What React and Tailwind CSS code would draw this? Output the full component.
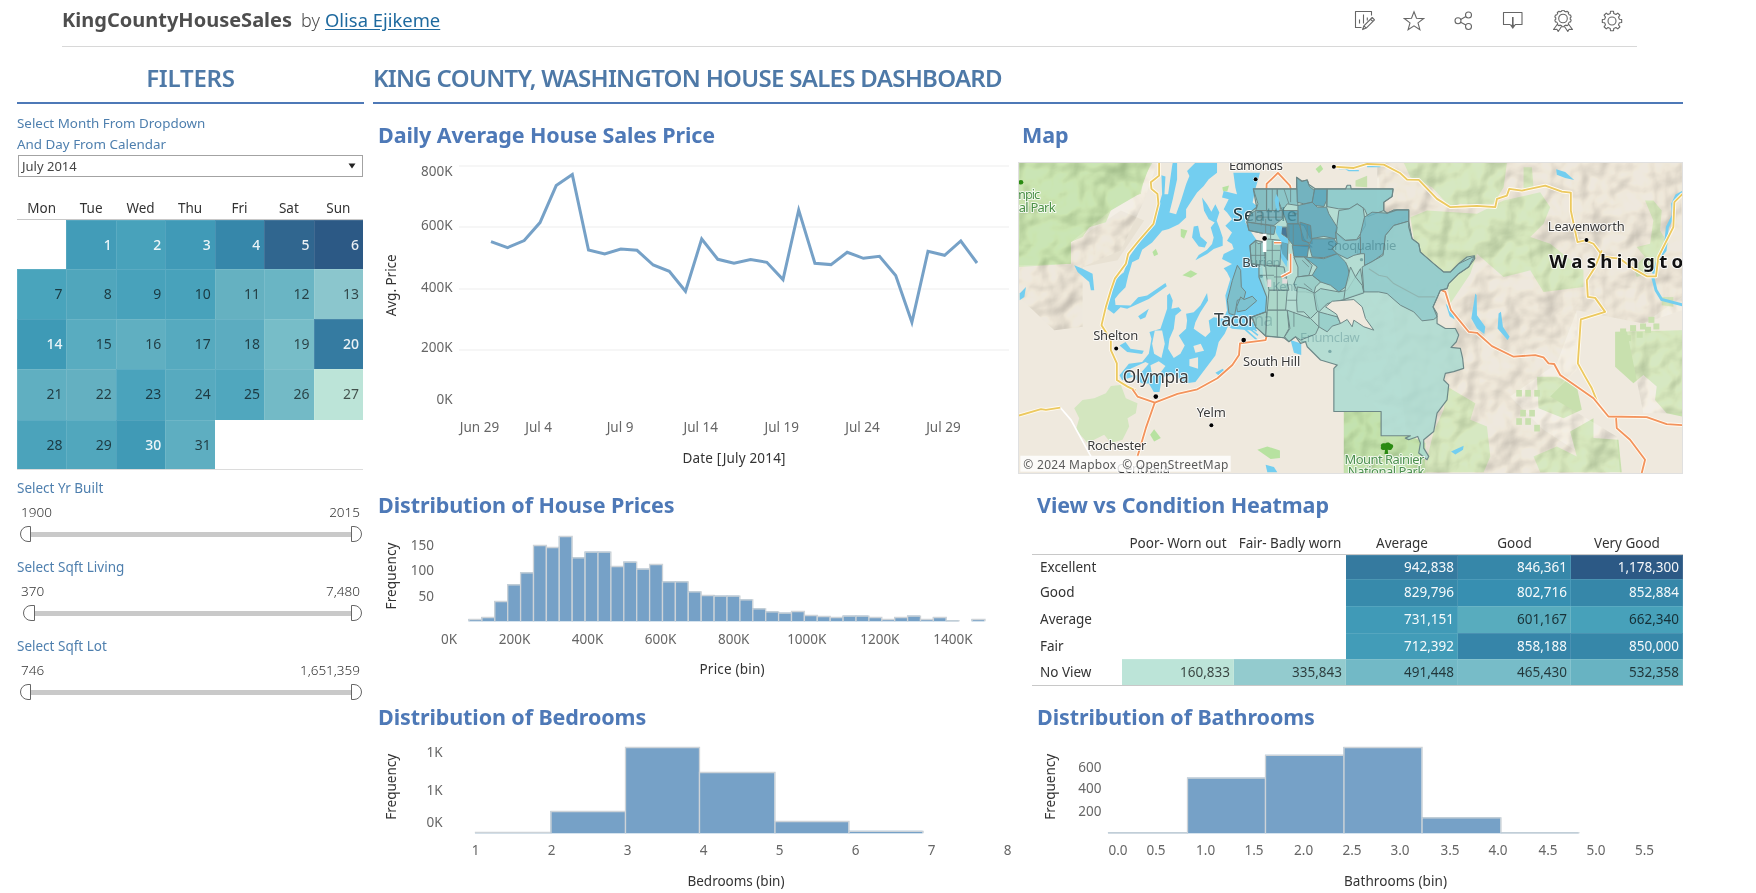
import React from "react";

const FONT = "font-['Noto_Sans','Open_Sans',sans-serif]";

/* ---------- toolbar icons ---------- */

function gearPath(cx, cy, teeth, r1, r2) {
  const pts = [];
  const step = (Math.PI * 2) / teeth;
  for (let i = 0; i < teeth; i++) {
    const a = i * step - Math.PI / 2;
    [[-0.3, r1], [-0.2, r2], [0.2, r2], [0.3, r1]].forEach(([k, r]) => {
      pts.push(`${(cx + Math.cos(a + k * step) * r).toFixed(2)},${(cy + Math.sin(a + k * step) * r).toFixed(2)}`);
    });
  }
  return `M${pts.join("L")}Z`;
}

function Icon({ children }) {
  return (
    <svg width="22" height="22" viewBox="0 0 22 22" fill="none" stroke="#666" strokeWidth="1.1" strokeLinejoin="round">
      {children}
    </svg>
  );
}

function Toolbar() {
  return (
    <div className="flex items-center gap-[27.5px] pr-[14px]">
      <Icon>
        <path d="M17.5 5.500V1.5H1.5v16h6M5.5 9.500v4M9.500 4.500v9M13.300 7.500v3" />
        <path d="M18.200 7.500l2.300 2.300-8.300 8.300-3.600 1.500 1.300-3.800zM16.500 9.200l2.300 2.300M9.900 15.800l2.300 2.300" />
      </Icon>
      <Icon>
        <path d="M11 1.800l2.500 6.500 7 .3-5.500 4.300 1.900 6.800L11 15.800l-5.900 3.900L7 12.900 1.500 8.600l7-.3z" strokeLinejoin="miter" />
      </Icon>
      <Icon>
        <circle cx="5" cy="10.800" r="3" />
        <circle cx="15.500" cy="5" r="3" />
        <circle cx="15.500" cy="16.500" r="3" />
        <path d="M7.700 9.400l5.200-3M7.700 12.200l5.200 2.900" />
      </Icon>
      <Icon>
        <path d="M8.500 14.500H1.500v-12h18.500v12h-7" />
        <path d="M10.800 7v9" strokeWidth="1.600" />
        <path d="M7.800 14.800h6l-3 4.200z" fill="#666" stroke="none" />
      </Icon>
      <Icon>
        <path d={gearPath(11, 8.500, 10, 7.300, 8.300)} />
        <circle cx="11" cy="8.500" r="4.300" />
        <path d="M5.200 14.500L1.500 19.500l3.400-.2 1.300 2.200 3.300-5M16.800 14.500l3.700 5-3.400-.2-1.300 2.200-3.300-5" />
      </Icon>
      <Icon>
        <path d={gearPath(11, 11, 8, 7.600, 9.800)} />
        <circle cx="11" cy="11" r="4" />
      </Icon>
    </div>
  );
}

/* ---------- filters ---------- */

const DAYS = ["Mon", "Tue", "Wed", "Thu", "Fri", "Sat", "Sun"];

const WEEKS = [
  [null, [1, "#429cb8", 1], [2, "#48a2bb", 1], [3, "#409ab7", 1], [4, "#3687aa", 1], [5, "#30668f", 1], [6, "#2c5985", 1]],
  [[7, "#49a4bc"], [8, "#50a6bc"], [9, "#48a2bb"], [10, "#48a2bb"], [11, "#65b1c1"], [12, "#6ab5c4"], [13, "#8bc6cd"]],
  [[14, "#3e9ab6", 1], [15, "#59acc0"], [16, "#60afc1"], [17, "#56aabf"], [18, "#5cacc0"], [19, "#77bdc8"], [20, "#357ba1", 1]],
  [[21, "#60afc1"], [22, "#64b0c1"], [23, "#4aa3bc"], [24, "#57aabf"], [25, "#50a7be"], [26, "#73bac6"], [27, "#bce4d8"]],
  [[28, "#4ba3bb"], [29, "#51a7bd"], [30, "#409ab6", 1], [31, "#5eaec1"], null, null, null],
];

function Calendar() {
  return (
    <div className="mr-px mt-[21px]">
      <div className="grid h-[22px] grid-cols-7 border-b border-[#c8c8c8] text-center text-[13.500px] leading-[20px] text-[#333]">
        {DAYS.map((d) => (
          <div key={d}>{d}</div>
        ))}
      </div>
      <div className="grid h-[250px] grid-cols-7 grid-rows-[49px_50px_50px_51px_49px] border-b border-[#dcdcdc]">
        {WEEKS.flat().map((c, i) =>
          c ? (
            <div
              key={i}
              className={`border-l border-t border-white/10 pr-[4px] text-right text-[14px] leading-[48px] ${c[2] ? "font-medium text-white/90" : "text-black/65"}`}
              style={{ backgroundColor: c[1] }}
            >
              {c[0]}
            </div>
          ) : (
            <div key={i} />
          )
        )}
      </div>
    </div>
  );
}

function RangeFilter({ label, min, max, wide }) {
  return (
    <div className="h-[79px]">
      <div className="text-[13.500px] leading-[20px] text-[#4e7fae]">{label}</div>
      <div className="mt-[4px] flex justify-between pl-[4px] pr-[4px] text-[13.500px] font-light leading-[20px] text-[#333]">
        <span>{min}</span>
        <span>{max}</span>
      </div>
      <div className={`mt-[4px] flex items-center pr-[2px] ${wide ? "pl-[6px]" : "pl-[3px]"}`}>
        <div className={`h-4 rounded-l-full border border-[#666] bg-white ${wide ? "w-3" : "w-[11px]"}`} />
        <div className="h-[5px] flex-1 bg-[#c9c9c9]" />
        <div className="h-4 w-[11px] rounded-r-full border border-[#666] bg-white" />
      </div>
    </div>
  );
}

function Filters() {
  return (
    <aside className="w-[347px] shrink-0">
      <h2 className="h-[57px] border-b-2 border-[#4e79b7] pt-[7px] text-center text-[24px] font-semibold leading-[48px] tracking-[-0.200px] text-[#4e79a7]">
        FILTERS
      </h2>
      <div className="mt-[9px] text-[13.400px] leading-[21px] text-[#4e7fae]">
        Select Month From Dropdown
        <br />
        And Day From Calendar
      </div>
      <div className="mx-px flex h-[22px] items-center justify-between border border-[#a3a3a3] pl-[3px] pr-[6px] text-[13px] leading-[20px] text-[#444]">
        <span>July 2014</span>
        <svg width="8" height="6" viewBox="0 0 8 6">
          <path d="M0.500 0.500h7L4 5.500z" fill="#222" />
        </svg>
      </div>
      <Calendar />
      <div className="mt-2">
        <RangeFilter label="Select Yr Built" min="1900" max="2015" />
        <RangeFilter label="Select Sqft Living" min="370" max="7,480" wide />
        <RangeFilter label="Select Sqft Lot" min="746" max="1,651,359" />
      </div>
    </aside>
  );
}

/* ---------- charts ---------- */

function PanelTitle({ children, className }) {
  return (
    <h3 className={`text-[21.500px] font-bold leading-[30px] tracking-[-0.100px] text-[#4e79b7] ${className}`}>{children}</h3>
  );
}

function Ticks({ items, anchor = "middle" }) {
  return (
    <g fill="#666" fontSize="13.500" textAnchor={anchor}>
      {items.map(([t, x, y], i) => (
        <text key={i} x={x} y={y}>
          {t}
        </text>
      ))}
    </g>
  );
}

function AxisTitle({ x, y, w, rotate, children }) {
  return (
    <text
      x={x}
      y={y}
      fill="#333"
      fontSize="13.500"
      textAnchor="middle"
      textLength={w}
      transform={rotate ? `rotate(-90 ${x} ${y})` : undefined}
    >
      {children}
    </text>
  );
}

function Bars({ base, bars }) {
  return (
    <g>
      {bars.map(([x1, x2, y], i) => (
        <g key={i}>
          <rect x={x1} y={y} width={x2 - x1} height={base - y} fill="#76a1c7" />
          <path d={`M${x1 + 0.5} ${base}V${y + 0.5}H${x2 + 0.5}V${base}`} fill="none" stroke="#cdd3d8" strokeWidth="1.300" />
        </g>
      ))}
    </g>
  );
}

const DAILY = [
  [491, 242.300], [507.600, 248.300], [524.200, 241.300], [540, 223.300], [556.200, 186.300], [572.300, 175.300], [588.500, 250.700],
  [604.700, 254.700], [620.800, 249.700], [637, 251], [653.200, 265.700], [669.300, 272], [685.500, 292], [701.700, 239.700],
  [717.800, 260], [734, 264], [750.600, 260.300], [766.800, 263], [783, 280.300], [798.700, 210.700], [814.900, 264], [831, 265.300],
  [847.200, 253], [863.400, 259], [879.500, 257], [895.700, 276.300], [911.900, 323], [928, 252], [944.600, 256], [960.800, 241.700],
  [977, 263.700],
];

function DailyChart() {
  return (
    <svg width="640" height="326" viewBox="373 150.700 640 326">
      <g stroke="#f6f6f6" strokeWidth="2">
        <path d="M459 166.700H1009M459 227.700H1009M459 289.700H1009M459 350.700H1009" />
      </g>
      <polyline points={DAILY.map((p) => p.join()).join(" ")} fill="none" stroke="#76a1c7" strokeWidth="3" />
      <Ticks anchor="end" items={[["800K", 452.500, 177], ["600K", 452.500, 231], ["400K", 452.500, 292.500], ["200K", 452.500, 353], ["0K", 452.500, 405]]} />
      <Ticks
        items={[["Jun 29", 479.500, 433], ["Jul 4", 538.700, 433], ["Jul 9", 620, 433], ["Jul 14", 700.800, 433], ["Jul 19", 781.700, 433], ["Jul 24", 862.500, 433], ["Jul 29", 943.400, 433]]}
      />
      <AxisTitle x={734} y={464} w={103}>Date [July 2014]</AxisTitle>
      <AxisTitle x={396} y={286} w={62} rotate>Avg. Price</AxisTitle>
    </svg>
  );
}

const PRICE_TOPS = [
  619.700, 617.700, 601.700, 585, 573, 545.700, 547.700, 536.700, 558, 552.300, 552.300, 566.700, 562.300, 569.300, 564.700, 582, 582,
  592, 595.700, 596.300, 596.300, 600, 609, 612, 613.300, 611.700, 615.700, 616.700, 617.700, 616.300, 616.300, 617.700, 619.700,
  617.700, 616.300, 619.700, 617.700, 621, null, 619.700,
];

function PriceChart() {
  const bars = PRICE_TOPS.map((y, i) => [468.500 + i * 12.900, 468.500 + (i + 1) * 12.900, y]).filter((b) => b[2] !== null);
  return (
    <svg width="640" height="170" viewBox="373 520.700 640 170">
      <Bars base={622} bars={bars} />
      <Ticks anchor="end" items={[["150", 434, 551], ["100", 434, 576], ["50", 434, 602]]} />
      <Ticks
        items={["0K", "200K", "400K", "600K", "800K", "1000K", "1200K", "1400K"].map((t, i) => [t, i ? 514.500 + (i - 1) * 73.070 : 449, 645])}
      />
      <AxisTitle x={732} y={674.500} w={65}>Price (bin)</AxisTitle>
      <AxisTitle x={396} y={576.700} w={67} rotate>Frequency</AxisTitle>
    </svg>
  );
}

function BedroomChart() {
  return (
    <svg width="640" height="161" viewBox="373 732.700 640 161">
      <Bars
        base={834}
        bars={[[475, 550.500, 832.700], [550.500, 625, 811.700], [625, 699, 747.700], [699, 774.500, 772.700], [774.500, 848.500, 821.700], [848.500, 922.600, 831.500]]}
      />
      <Ticks anchor="end" items={[["1K", 442.500, 758], ["1K", 442.500, 795.500], ["0K", 442.500, 827.500]]} />
      <Ticks items={[1, 2, 3, 4, 5, 6, 7, 8].map((n) => [n, 475.500 + (n - 1) * 76, 856])} />
      <AxisTitle x={736} y={886.500} w={97}>Bedrooms (bin)</AxisTitle>
      <AxisTitle x={396} y={787.500} w={66} rotate>Frequency</AxisTitle>
    </svg>
  );
}

function BathroomChart() {
  const xs = [1118, 1156, 1205.600, 1254, 1303.600, 1352, 1400, 1450, 1498, 1548, 1596, 1644.500];
  return (
    <svg width="651" height="161" viewBox="1032 732.700 651 161">
      <Bars
        base={834}
        bars={[[1108, 1187, 833], [1187, 1265, 778.300], [1265, 1343.500, 755.500], [1343.500, 1421.600, 747.700], [1421.600, 1500.500, 818], [1500.500, 1578.500, 833]]}
      />
      <Ticks anchor="end" items={[["600", 1101.500, 773], ["400", 1101.500, 794], ["200", 1101.500, 816.500]]} />
      <Ticks items={xs.map((x, i) => [(i / 2).toFixed(1), x, 856])} />
      <AxisTitle x={1395.500} y={886.500} w={103}>Bathrooms (bin)</AxisTitle>
      <AxisTitle x={1055} y={787.500} w={66} rotate>Frequency</AxisTitle>
    </svg>
  );
}

/* ---------- heatmap ---------- */

const HEAT = [
  ["Excellent", null, null, ["942,838", "#357a9f", 1], ["846,361", "#3687a9", 1], ["1,178,300", "#2c5985", 1]],
  ["Good", null, null, ["829,796", "#378aab", 1], ["802,716", "#378fb1", 1], ["852,884", "#3687a9", 1]],
  ["Average", null, null, ["731,151", "#409ab7", 1], ["601,167", "#58acbe"], ["662,340", "#47a1ba"]],
  ["Fair", null, null, ["712,392", "#429cb8", 1], ["858,188", "#3685a9", 1], ["850,000", "#3687a9", 1]],
  ["No View", ["160,833", "#bce4d8"], ["335,843", "#93cbce"], ["491,448", "#72b9c6"], ["465,430", "#77bcc8"], ["532,358", "#68b3c2"]],
];

function Heatmap() {
  return (
    <div className="mt-[13px] text-[13.500px] text-[#333]">
      <div className="grid h-[22px] grid-cols-[90px_112px_112px_112px_113px_112px] border-b border-[#c8c8c8] text-center leading-[20px]">
        <div />
        {["Poor- Worn out", "Fair- Badly worn", "Average", "Good", "Very Good"].map((h) => (
          <div key={h} className="whitespace-nowrap">{h}</div>
        ))}
      </div>
      <div className="grid h-[131px] grid-cols-[90px_112px_112px_112px_113px_112px] grid-rows-[24px_27px_27px_26px_26px] border-b border-[#c8c8c8] leading-[20px]">
        {HEAT.flat().map((c, i) => {
          if (c === null) return <div key={i} />;
          if (typeof c === "string") return <div key={i} className="flex items-center pb-px pl-2">{c}</div>;
          return (
            <div
              key={i}
              className={`flex items-center justify-end border-r border-t border-white/10 pb-[2px] pr-[3px] ${c[2] ? "text-white/95" : "text-black/70"}`}
              style={{ backgroundColor: c[1] }}
            >
              {c[0]}
            </div>
          );
        })}
      </div>
    </div>
  );
}

/* ---------- map ---------- */

const LAND = "#efe9de";

const FOREST = [
  "24,156 425,156 400,200 390,250 340,262 300,300 285,335 235,350 215,380 180,395 180,460 24,470",
  "1180,156 1490,156 1480,230 1450,280 1400,285 1350,280 1320,290 1265,230 1200,200",
  "1200,320 1250,300 1400,310 1480,270 1590,245 1620,290 1600,340 1560,380 1620,400 1720,480 1720,530 1600,545 1560,480 1480,500 1400,430 1380,490 1320,580 1310,520 1270,470 1230,430 1210,385",
  "1580,800 1640,800 1700,830 1715,900 1660,925 1585,895",
  "1310,830 1395,880 1380,930 1430,950 1440,1040 1420,1088 1240,1088 1270,965 1300,900",
  "1570,1040 1640,1010 1700,1040 1680,965 1750,925 1750,985 1825,990 1835,1088 1590,1088",
  "1815,665 2018,660 2018,920 1970,910 1935,870 1940,830 1900,795 1870,820 1815,770",
  "1955,560 1990,560 1990,590 1955,585",
  "1905,270 1930,270 1955,300 1950,360 1975,400 1940,480 1880,500 1870,470 1905,440 1880,410 1920,400 1930,330",
  "1540,170 1565,170 1570,230 1540,235",
  "1035,210 1070,195 1070,230 1035,228",
];

const LOWLAND_FOREST = [
  "285,850 300,828 330,825 345,865 380,880 375,910 350,925 355,950 335,990 300,1000 280,975 230,1000 195,960 205,925 190,895 215,870 250,865",
];

const PARKS = [
  "740,1020 770,1010 808,1022 808,1045 780,1048",
  "515,495 540,480 560,490 540,502",
  "510,355 530,360 520,385 510,378",
  "915,175 930,162 938,175 925,188",
  "418,975 430,958 450,985 430,995",
  "635,230 655,225 650,242 637,242",
  "425,425 435,415 442,432 430,438",
];

/* Puget Sound and its inlets, drawn in their own local frame */
const SOUND = [
  "188,38 200,42 197,95 208,95 220,10 222,0 235,0 235,50 222,110 212,150 232,155 248,110 262,65 272,40 265,25 290,0 355,0 355,30 330,50 315,70 295,90 278,115 262,140 262,165 240,185 210,200 190,205 160,240 130,262 120,290 100,300 88,340 80,375 60,395 48,410 50,428 95,430 118,405 145,400 200,362 204,372 165,400 150,410 110,428 85,440 65,435 45,455 25,440 28,420 50,350 75,330 90,285 125,235 160,190 180,130 190,95",
  "404,30 484,30 470,80 462,120 480,135 445,150 440,180 455,205 475,235 475,300 490,305 495,350 505,390 505,445 475,465 455,470 475,500 460,505 400,500 385,490 375,470 385,445 380,400 395,350 385,330 375,318 400,305 370,290 375,275 405,260 400,245 385,235 400,210 380,190 400,170 385,150 375,140 390,110 370,105 375,85 415,95 410,75",
  "345,465 375,470 388,492 378,515 360,540 350,580 320,620 290,660 258,665 225,640 190,645 182,690 165,690 150,665 130,665 100,645 70,655 62,640 90,605 130,600 150,575 158,530 152,510 185,500 195,470 205,440 205,400 213,393 222,415 218,440 240,435 248,445 230,460 225,500 212,530 208,560 225,588 245,575 258,550 240,520 262,500 265,475 262,455 285,450 305,430 325,392 328,415 305,450 290,480 285,500 320,525 335,510 330,475",
  "310,105 325,125 338,148 350,125 362,150 354,175 362,195 372,225 372,250 345,260 325,275 290,294 300,278 325,262 340,245 345,225 336,195 348,180 330,170 316,145",
  "285,192 298,190 305,222 325,240 318,255 300,252 280,225",
  "62,550 80,540 95,560 135,566 130,576 85,570",
  "118,462 150,440 140,465 125,472",
  "350,632 372,620 378,628 362,642",
];

const SOUND_ISLANDS = [
  "284,552 306,545 316,566 290,572",
  "272,592 298,586 298,620 272,612",
  "168,505 190,505 198,545 188,588 166,575 160,545",
  "95,620 140,600 150,605 120,640 95,640",
  "155,610 180,598 200,612 185,632 160,640",
];

const LAKES = [
  "190,465 215,475 245,490 250,540 240,540 235,515 200,485",
  "26,550 45,530 40,560 26,570",
  "840,690 872,700 872,735 850,728",
  "765,1065 790,1072 800,1088 770,1088",
  "1638,176 1665,184 1692,208 1665,202 1640,192",
  "1395,550 1399,555 1400,615 1425,650 1422,672 1400,655 1383,625",
  "1465,610 1472,605 1478,650 1498,680 1492,690 1462,655",
  "1322,1025 1360,1008 1358,1020 1335,1034",
  "1306,580 1325,600 1333,628 1318,618",
];

const YELLOW_ROADS = [
  "445,156 445,195 420,215 422,235 440,250 443,280 428,340 385,390 352,430 345,460 312,505 300,540 285,590 272,645 300,690 300,720 318,760 318,810 350,830 375,842",
  "24,917 90,898 105,900 148,893",
  "968,168 1030,172 1070,160 1120,162 1170,188 1190,207 1225,208 1280,265 1320,290 1400,286 1455,290 1460,265 1490,255 1497,235 1535,240 1605,225 1655,243 1682,246 1682,300 1702,395 1725,390 1750,400 1780,440 1830,445 1870,475 1910,498 1938,498 1945,440 1990,350 1993,275 2018,250",
  "1775,420 1755,470 1730,510 1733,560 1755,563 1785,605 1712,628 1703,760 1725,800 1745,835 1765,885 1790,915",
];

const ORANGE_ROADS = [
  "765,300 768,220 802,187 838,225 842,240",
  "365,838 380,860 432,878 500,852 560,838 620,805 665,765 685,735 688,700 765,690 770,670",
  "432,878 405,955 380,1040",
  "1290,538 1305,545 1322,600 1375,665 1400,668 1445,708 1510,740 1575,735 1600,742 1615,760 1632,762 1650,795 1750,865 1795,920 1910,922 1970,943 2018,946",
  "1818,925 1820,955 1860,990 1905,1050 1895,1090",
];

const COUNTY =
  "728,235 858,235 858,200 875,212 890,208 895,222 915,235 1005,235 1010,224 1020,224 1022,235 1148,235 1145,258 1120,275 1120,300 1130,308 1160,298 1195,298 1195,350 1205,385 1225,400 1230,425 1270,460 1300,485 1320,485 1345,460 1370,440 1392,436 1393,445 1375,470 1345,490 1315,520 1310,535 1290,540 1268,590 1280,610 1280,640 1305,655 1335,655 1345,675 1338,695 1322,712 1350,715 1357,745 1360,775 1330,785 1305,790 1300,810 1315,825 1310,870 1280,910 1270,965 1240,990 1240,1015 1255,1040 1250,1050 1225,1030 1230,1000 1222,980 1195,990 1185,985 1200,978 1112,978 1112,905 970,905 970,775 980,765 930,750 890,710 885,695 870,700 855,680 835,695 820,683 790,680 765,678 735,650 725,620 765,605 768,560 745,500 745,465 722,460 718,405 735,390 760,395 762,370 715,360 708,335 720,305 738,290";

const ZONES = [
  ["728,235 768,235 768,300 735,300 742,280", "#79b7be"],
  ["768,235 800,235 800,262 812,300 768,300", "#7fbcc3"],
  ["800,235 860,235 862,285 830,280 815,300 800,262", "#82c0c6"],
  ["858,200 872,212 890,208 897,228 912,240 905,275 880,280 860,275", "#63a9ba"],
  ["912,235 950,235 948,270 940,288 915,285 905,275", "#4f9fb8"],
  ["950,235 1148,235 1145,258 1120,275 1120,300 1072,318 1062,295 1040,280 1020,295 985,295 948,288", "#8ac8ca"],
  ["985,300 1015,295 1040,280 1058,292 1062,320 1065,345 1050,370 1038,388 1000,390 975,365 980,340", "#8fcaca"],
  ["862,285 905,275 920,290 948,290 955,310 980,350 975,385 940,378 900,385 880,345 862,340", "#5aa3b8"],
  ["815,300 862,300 862,340 830,340", "#4f9ab3"],
  ["735,300 815,300 815,325 790,345 710,335 720,310", "#6fa9b6"],
  ["710,335 795,348 790,372 762,370 715,360", "#5e9fb2"],
  ["830,340 865,340 880,385 905,410 848,405 828,380", "#3e8ca9"],
  ["812,350 828,350 830,382 812,370", "#2e5c86"],
  ["868,335 900,345 905,400 875,390", "#4793ae"],
  ["905,385 970,385 980,400 965,415 980,430 940,442 905,440 895,405", "#4b99b3"],
  ["845,405 895,405 890,440 850,438", "#3e91b1"],
  ["808,392 832,400 830,450 812,440", "#4d9fbd"],
  ["880,440 905,442 940,445 980,430 1005,455 1012,470 1018,500 1005,530 985,545 960,525 930,515 905,495 920,470", "#57a7bd"],
  ["1062,320 1085,305 1130,308 1150,298 1195,298 1195,332 1150,345 1125,375 1118,430 1085,455 1062,465 1062,430 1040,430 1050,370", "#6db3c0"],
  ["975,365 1005,390 1038,388 1050,380 1050,430 1030,435 1010,445 980,430 965,415 980,400", "#77bac4"],
  ["1195,332 1205,385 1225,400 1230,425 1270,460 1300,485 1320,485 1345,460 1392,438 1375,470 1345,490 1315,520 1310,535 1290,540 1268,590 1280,620 1270,628 1235,632 1210,605 1170,585 1130,550 1105,545 1060,545 1055,470 1118,435 1125,375 1150,345", "#90c9ca"],
  ["718,405 735,392 742,400 760,395 765,465 722,460", "#89bfbd"],
  ["765,385 812,390 808,465 765,465", "#98cac2"],
  ["765,465 820,470 835,540 775,540 768,500", "#a1cfc3"],
  ["850,440 880,440 905,465 895,495 862,500 862,470", "#8dc4c4"],
  ["858,500 905,495 930,515 915,530 910,550 885,545 860,545 850,520", "#95cac6"],
  ["775,540 830,540 825,600 770,600", "#aad6c7"],
  ["860,530 885,535 915,550 918,575 925,600 900,625 880,605 860,605 858,570", "#a5d5ca"],
  ["770,600 830,600 835,655 820,683 765,678", "#a9d7c8"],
  ["722,620 768,605 765,678 735,650", "#9bcbc3"],
  ["830,600 900,625 925,650 915,672 870,690 855,680 835,695 822,680 838,655", "#9dd1c6"],
  ["925,605 950,612 980,620 990,640 965,648 950,665 925,650", "#94cdc9"],
  ["910,550 930,535 985,545 1010,540 1050,475 1060,545 1000,568 950,580 925,605 918,600", "#9bd0c9"],
  ["1020,470 1035,500 1055,525 1060,548 1000,568 1005,530", "#a5d7ce"],
  ["680,465 690,480 692,530 705,545 700,565 680,570 672,615 655,610 650,570 665,510", "#7fbcc2"],
  ["690,560 700,568 725,558 738,572 705,600 680,605 678,590", "#7fbfc8"],
];

const COUNTY_HOLE = "945,590 965,573 1030,568 1055,590 1065,625 1090,660 1060,650 1030,630 1025,650 1010,628 990,640 978,612";

function Place({ x, y, w, size = 39, children, fill = "#3b3b3b", weight = 400 }) {
  return (
    <text x={x} y={y} fontSize={size} textLength={w} fill={fill} fontWeight={weight} stroke="#fff" strokeWidth="6" paintOrder="stroke" strokeLinejoin="round" strokeOpacity=".8">
      {children}
    </text>
  );
}

function Polys({ list, fill }) {
  return list.map((p, i) => <polygon key={i} points={p} fill={fill} />);
}

function Roads({ list, color }) {
  return (
    <g fill="none" strokeLinejoin="round">
      {list.map((p, i) => (
        <polyline key={`c${i}`} points={p} stroke="#fffaf0" strokeWidth="11" />
      ))}
      {list.map((p, i) => (
        <polyline key={i} points={p} stroke={color} strokeWidth="5.500" />
      ))}
    </g>
  );
}

function RegionMap() {
  return (
    <svg className="mt-3 block border border-[#e0e0e0]" width="665" height="312" viewBox="24 157 1992 933" preserveAspectRatio="none">
      <defs>
        <filter id="relief" x="0" y="0" width="100%" height="100%" colorInterpolationFilters="sRGB">
          <feTurbulence type="fractalNoise" baseFrequency=".008" numOctaves="3" seed="11" />
          <feDiffuseLighting surfaceScale="34" diffuseConstant="1.150" lightingColor="#fff8e6">
            <feDistantLight azimuth="225" elevation="60" />
          </feDiffuseLighting>
        </filter>
        <clipPath id="mountains">
          <path d="M24 156H440L400 270L330 420L215 470L215 650L130 660L24 560ZM1100 156H2016V600L1900 640L1700 600L1700 780L1620 860L1820 980L1830 1090H1000V905H1112L970 775L1100 500ZM1850 660H2016V910H1900Z" />
        </clipPath>
      </defs>
      <rect x="24" y="156" width="1992" height="935" fill={LAND} />
      <path d="M24 460L180 400L330 300L400 330L320 450L215 470L215 650L130 660L24 560ZM1100 156H2016V560L1900 640L1700 600L1640 760L1500 860L1600 960L1800 1090H1200Z" fill="#e8e1d3" />
      <Polys list={FOREST} fill="#c8e0ae" />
      <Polys list={LOWLAND_FOREST} fill="#d3e6bf" />
      <Polys list={PARKS} fill="#b7e2a0" />
      <polygon points="24,156 420,156 385,250 300,300 180,395 180,460 24,465" fill="#b9dc9c" />
      <polygon points="1000,905 1112,905 1112,978 1200,978 1245,1000 1245,1091 1000,1091" fill="#afd996" />
      <g clipPath="url(#mountains)">
        <rect x="24" y="156" width="1992" height="935" filter="url(#relief)" opacity=".25" style={{ mixBlendMode: "multiply" }} />
      </g>
      <g fill="#c8e0ae">
        {[1518, 1545, 1572, 1530, 1557, 1518, 1545, 1572].map((x, i) => (
          <rect key={i} x={x} y={[840, 840, 840, 900, 900, 925, 925, 945][i]} width="17" height="20" />
        ))}
        {[1830, 1860, 1890, 1915, 1845, 1880, 1905, 1930].map((x, i) => (
          <rect key={`b${i}`} x={x} y={[655, 645, 640, 620, 675, 665, 650, 640][i]} width="18" height="18" />
        ))}
      </g>
      <g transform="translate(264 156)">
        <Polys list={SOUND} fill="#73cef0" />
        <Polys list={SOUND_ISLANDS} fill={LAND} />
      </g>
      <Polys list={LAKES} fill="#73cef0" />
      <path d="M700 655l40 35M708 648l34 28M716 645l22 18" stroke="#73cef0" strokeWidth="5" fill="none" />
      <g fill="none" stroke="#73cef0">
        <polyline points="2018,245 2000,255 1988,280 1990,315 1972,350 1965,420 1945,445 1930,490" strokeWidth="9" />
        <polyline points="1928,500 1938,540 1955,568 2018,584" strokeWidth="9" />
        <path d="M985 174h20l10 6h30M1070 168h40" strokeWidth="4" />
      </g>
      <polyline points="148,893 180,930 210,985 240,1040" fill="none" stroke="#fff" strokeWidth="5" />
      <Roads list={YELLOW_ROADS} color="#ecc95f" />
      <Roads list={ORANGE_ROADS} color="#f3935c" />

      <Place x={667} y={333} w={192} size={54} fill="#222">Seattle</Place>
      <Place x={695} y={471} w={115}>Burien</Place>
      <Place x={610} y={648} w={178} size={52}>Tacoma</Place>

      <polygon points={COUNTY} fill="#a9dad1" fillOpacity=".84" />
      <g fillOpacity=".8" stroke="#6d8888" strokeWidth="3" strokeLinejoin="round">
        {ZONES.map(([p, c], i) => (
          <polygon key={i} points={p} fill={c} />
        ))}
      </g>
      <g fill="none" stroke="#6d8888" strokeWidth="2.500">
        <path d="M735 300V335M752 300V345M785 235V300M820 235L835 280M840 235V275M862 310H845M740 320H815M765 325V370M780 345V385M835 345V400M848 340V405M890 345V385M735 395V462M750 398V462M785 390V465M798 465V540M745 495H790M790 500H830M800 540V600M830 570H860M800 600V680M850 605V650M720 435H765M765 420H810M875 450L895 470M880 520L905 540M950 235V290" />
      </g>
      <polygon points={COUNTY} fill="none" stroke="#6d8888" strokeWidth="3.500" strokeLinejoin="round" />
      <polygon points={COUNTY_HOLE} fill={LAND} stroke="#6d8888" strokeWidth="3" />
      <polygon points="797,250 805,265 805,300 798,300 792,270" fill="#73cef0" />
      <polygon points="798,345 815,348 812,372 832,385 832,400 812,395 795,365" fill="#73cef0" />
      <polygon points="808,400 815,430 830,450 828,470 812,445" fill="#73cef0" />
      <path d="M762 370V425M790 397H812M840 430V485L812 500" fill="none" stroke="#fff" strokeWidth="11" />
      <path d="M790 397H812M840 430V485L812 500" fill="none" stroke="#f3935c" strokeWidth="5" />
      <path d="M770 508h12v22h-12zM815 505h15v15h-15z" fill="#e4dcdc" />
      <path d="M1075 475L1105 495 1130 500 1150 520 1225 560H1275" fill="none" stroke="#8fb5b1" strokeWidth="3.500" />

      <g fill="#27606c" fillOpacity=".42" fontSize="39">
        <text x={667} y={333} textLength={192} fontSize="54">Seattle</text>
        <text x={695} y={471} textLength={115} fillOpacity=".3">Burien</text>
        <text x={785} y={543} textLength={75} fillOpacity=".3">Kent</text>
        <text x={610} y={648} textLength={178} fontSize="52" fillOpacity=".2">Tacoma</text>
        <text x={950} y={420} textLength={208} fillOpacity=".38">Snoqualmie</text>
        <text x={868} y={697} textLength={180} fillOpacity=".28">Enumclaw</text>
        <circle cx="1053" cy="448" r="5" />
        <circle cx="958" cy="724" r="5" />
        <circle cx="752" cy="498" r="5" />
      </g>

      <Place x={655} y={177} w={162}>Edmonds</Place>
      <Place x={247} y={689} w={135}>Shelton</Place>
      <Place x={336} y={818} w={198} size={52}>Olympia</Place>
      <Place x={697} y={768} w={172}>South Hill</Place>
      <Place x={558} y={920} w={88}>Yelm</Place>
      <Place x={229} y={1021} w={178}>Rochester</Place>
      <Place x={318} y={1090} w={160}>Centralia</Place>
      <Place x={1613} y={363} w={231}>Leavenworth</Place>
      <Place x={1617} y={474} w={452} size={56} weight={700} fill="#111">Washington</Place>
      <Place x={-42} y={266} w={130} fill="#4a9045">Olympic</Place>
      <Place x={-86} y={306} w={220} fill="#4a9045">National Park</Place>
      <Place x={1002} y={1062} w={240} fill="#4d9150">Mount Rainier</Place>
      <Place x={1012} y={1100} w={230} fill="#4d9150">National Park</Place>
      <path d="M1122 1033l2-13c-8 3-16-2-12-9-4-8 6-13 12-10 6-5 14-3 17 2 8 0 10 9 4 13-2 6-9 6-13 3l1 14z" fill="#2a8a12" />
      <circle cx="30" cy="215" r="7" fill="#2a8a12" />
      <g fill="#000" stroke="#fff" strokeWidth="3" paintOrder="stroke">
        {[[735, 206, 6], [970, 168, 6], [762, 384, 7], [699, 690, 7], [316, 715, 6], [435, 860, 7], [785, 795, 6], [602, 946, 6], [1729, 389, 6]].map(
          ([x, y, r]) => (
            <circle key={x} cx={x} cy={y} r={r} />
          )
        )}
      </g>
      <rect x="28" y="1038" width="632" height="48" fill="#fff" fillOpacity=".82" />
      <g fill="#5a5a5a" fontSize="36">
        <text x="37" y="1077" textLength="279">© 2024 Mapbox</text>
        <text x="334" y="1077" textLength="319">© OpenStreetMap</text>
      </g>
    </svg>
  );
}

/* ---------- page ---------- */

export default function App() {
  return (
    <div className={`h-[893px] w-[1756px] overflow-hidden bg-white ${FONT}`}>
      <header className="ml-[62px] flex h-[47px] w-[1575px] items-start justify-between border-b border-[#d8d8d8]">
        <div className="flex items-baseline text-[18.400px] leading-[39px]">
          <h1 className="w-[239px] whitespace-nowrap text-[20px] font-bold text-[#4e4e4e]">KingCountyHouseSales</h1>
          <span className="w-[24px] text-[18px] font-light text-[#4e4e4e]">by</span>
          <a className="whitespace-nowrap text-[#1f6a9f] underline underline-offset-2">Olisa Ejikeme</a>
        </div>
        <div className="mt-[10px]">
          <Toolbar />
        </div>
      </header>

      <div className="flex gap-[9px] pl-[17px]">
        <Filters />
        <main className="w-[1310px] shrink-0">
          <h2 className="h-[57px] whitespace-nowrap border-b-2 border-[#4e79b7] pt-[7px] text-[24px] font-semibold leading-[48px] tracking-[-0.700px] text-[#4e79a7]">
            KING COUNTY, WASHINGTON HOUSE SALES DASHBOARD
          </h2>
          <div className="flex h-[372px] pt-4">
            <section className="w-[645px] shrink-0">
              <PanelTitle className="pl-[5px]">Daily Average House Sales Price</PanelTitle>
              <DailyChart />
            </section>
            <section className="w-[665px] shrink-0">
              <PanelTitle className="pl-[4px]">Map</PanelTitle>
              <RegionMap />
            </section>
          </div>
          <div className="flex h-[212px] pt-[14px]">
            <section className="w-[659px] shrink-0">
              <PanelTitle className="pl-[5px]">Distribution of House Prices</PanelTitle>
              <PriceChart />
            </section>
            <section className="w-[651px] shrink-0">
              <PanelTitle className="pl-[5px]">View vs Condition Heatmap</PanelTitle>
              <Heatmap />
            </section>
          </div>
          <div className="flex h-[205px] pt-[14px]">
            <section className="w-[659px] shrink-0">
              <PanelTitle className="pl-[5px]">Distribution of Bedrooms</PanelTitle>
              <BedroomChart />
            </section>
            <section className="w-[651px] shrink-0">
              <PanelTitle className="pl-[5px]">Distribution of Bathrooms</PanelTitle>
              <BathroomChart />
            </section>
          </div>
        </main>
      </div>
    </div>
  );
}
